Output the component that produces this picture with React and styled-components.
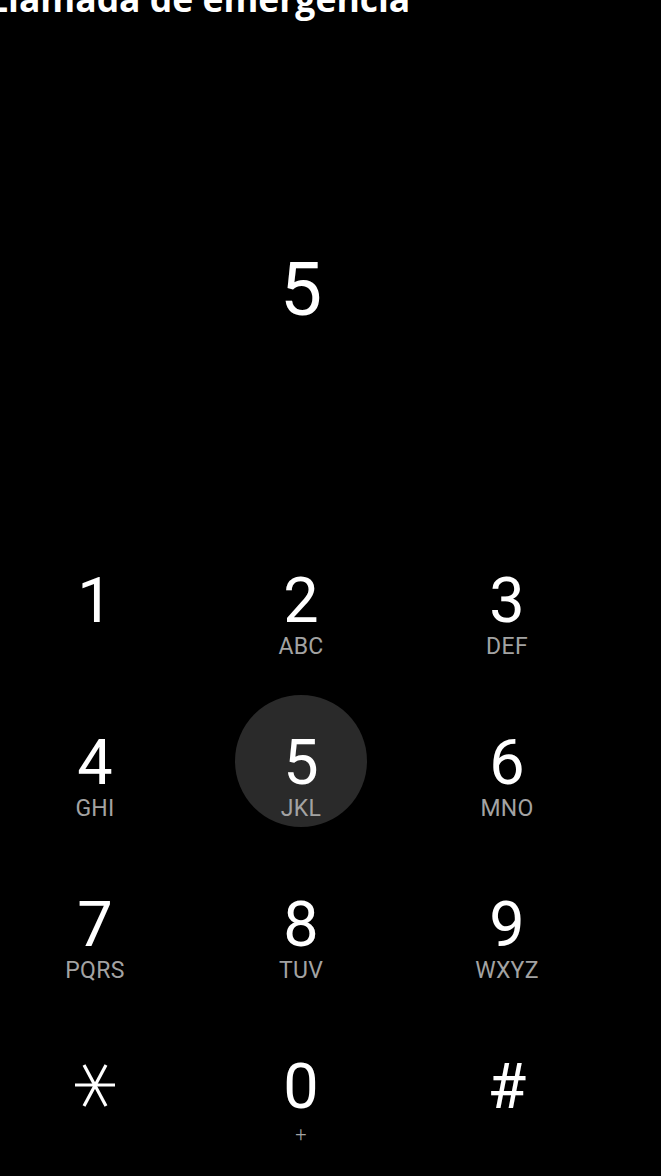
import styled, { createGlobalStyle } from 'styled-components'

const GlobalStyle = createGlobalStyle`
    html, body {
        margin: 0;
        padding: 0;
        background: #000;
        overflow: hidden;
    }
    body {
        font-family: Roboto, "Noto Sans", sans-serif;
        color: #fff;
    }
`

const KEYS = [
    { digit: '1', letters: '' },
    { digit: '2', letters: 'ABC' },
    { digit: '3', letters: 'DEF' },
    { digit: '4', letters: 'GHI' },
    { digit: '5', letters: 'JKL', pressed: true },
    { digit: '6', letters: 'MNO' },
    { digit: '7', letters: 'PQRS' },
    { digit: '8', letters: 'TUV' },
    { digit: '9', letters: 'WXYZ' },
    { digit: 'star', letters: '' },
    { digit: '0', letters: '+', small: true },
    { digit: '#', letters: '' },
]

const Screen = styled.div`
    width: 661px;
    height: 1176px;
    background: #000;
    overflow: hidden;
`

const Content = styled.div`
    width: 602px;
    display: flex;
    flex-direction: column;
`

const Title = styled.h1`
    margin: -20px 0 0 -12px;
    font-family: "Open Sans", Roboto, sans-serif;
    font-size: 35.5px;
    font-weight: 700;
    line-height: 36px;
    white-space: nowrap;
    color: #fff;
`

const Display = styled.div`
    height: 517px;
    display: flex;
    align-items: center;
    justify-content: center;
    font-size: 75px;
    line-height: 1;
    font-weight: 400;
    padding-top: 30px;
    box-sizing: border-box;
`

const Keypad = styled.div`
    display: grid;
    grid-template-columns: repeat(3, 132px);
    grid-auto-rows: 132px;
    column-gap: 74px;
    row-gap: 30px;
    justify-content: center;
`

const Key = styled.div`
    width: 132px;
    height: 132px;
    border-radius: 50%;
    background: ${p => p.$pressed ? '#2a2a2a' : 'transparent'};
    display: flex;
    flex-direction: column;
    align-items: center;
    padding-top: 37px;
    box-sizing: border-box;
`

const Digit = styled.span`
    font-size: 63px;
    line-height: 62px;
    height: 62px;
    display: flex;
    align-items: center;
`

const Letters = styled.span`
    margin-top: ${p => p.$small ? '5px' : '4px'};
    font-size: ${p => p.$small ? '20px' : '23px'};
    font-weight: ${p => p.$small ? 300 : 400};
    line-height: 22px;
    color: #a3a3a3;
    letter-spacing: 0.3px;
`

function StarIcon() {
    return (
        <svg width="44" height="46" viewBox="0 0 44 46" fill="none" stroke="#fff" strokeWidth="3.2">
            <line x1="2" y1="21" x2="42" y2="21" />
            <line x1="11" y1="1" x2="33" y2="42" />
            <line x1="33" y1="1" x2="11" y2="42" />
        </svg>
    )
}

export default function App() {
    return (
        <Screen>
            <GlobalStyle />
            <Content>
                <Title>Llamada de emergencia</Title>
                <Display>5</Display>
                <Keypad>
                    {KEYS.map(k => (
                        <Key key={k.digit} $pressed={k.pressed}>
                            <Digit>{k.digit === 'star' ? <StarIcon /> : k.digit}</Digit>
                            {k.letters && <Letters $small={k.small}>{k.letters}</Letters>}
                        </Key>
                    ))}
                </Keypad>
            </Content>
        </Screen>
    )
}
